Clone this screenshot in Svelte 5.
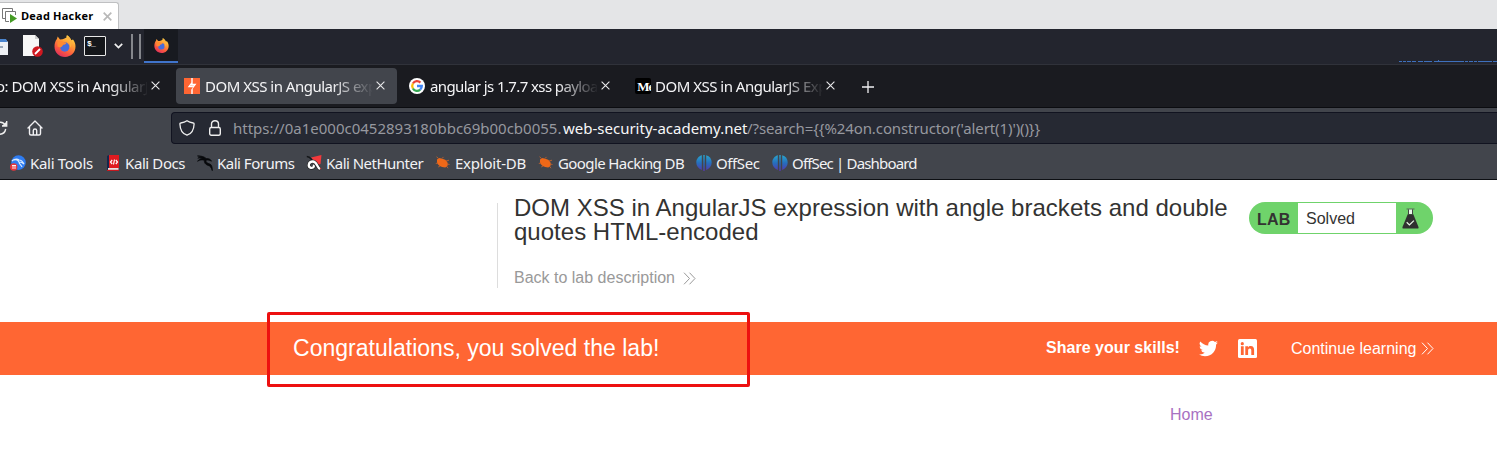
<script>
  const tabs = [
    { title: 'o: DOM XSS in AngularJS', icon: 'none', cls: 'first' },
    { title: 'DOM XSS in AngularJS exp', icon: 'burp', cls: 'active' },
    { title: 'angular js 1.7.7 xss payloa', icon: 'google', cls: 'google' },
    { title: 'DOM XSS in AngularJS Exp', icon: 'medium', cls: 'medium' },
  ];
  const bookmarks = [
    { label: 'Kali Tools', icon: 'tools', w: 95, ls: -0.3 },
    { label: 'Kali Docs', icon: 'docs', w: 92, ls: -0.4 },
    { label: 'Kali Forums', icon: 'dragon', w: 109, ls: -0.5 },
    { label: 'Kali NetHunter', icon: 'hunter', w: 129, ls: -0.52 },
    { label: 'Exploit-DB', icon: 'bug', w: 103, ls: -0.22 },
    { label: 'Google Hacking DB', icon: 'bug', w: 158, ls: -0.6 },
    { label: 'OffSec', icon: 'offsec', w: 76, ls: -0.4 },
    { label: 'OffSec | Dashboard', icon: 'offsec', w: 150, ls: -0.83 },
  ];
</script>

{#snippet firefox(size)}
  <svg class="ff" width={size} height={size} viewBox="0 0 22 22">
    <defs>
      <linearGradient id="flame" x1="0.8" y1="0" x2="0.25" y2="1">
        <stop offset="0" stop-color="#ffe14a" /><stop offset=".38" stop-color="#ff9a35" />
        <stop offset=".7" stop-color="#fb5840" /><stop offset="1" stop-color="#dc2c5e" />
      </linearGradient>
    </defs>
    <path fill="url(#flame)" d="M13 0c3 2 4 4 4.300 5.200L19 4.600c1.600 2 2.500 4.300 2.500 7C21.500 17.600 17 22 11 22S.5 17.500.5 11.500c0-3 .8-5.500 2.400-7.500l.8-2.400L6 4.500l2.500-.2c1.500-.4 2.500-1 4-1.800C12.200 1.800 12.400.8 13 0z" />
    <circle cx="10.800" cy="12" r="4.700" fill="#466ddc" />
    <path fill="#ff8a32" d="M3.500 7.500c2-2 4.500-1.700 6-.6l3 .8c-.5 1.500-2 1.900-3.400 2.100-.5 1.700-1.600 2.200-2.600 2.700l-3-1z" />
    <path fill="#ffb23d" d="M13 4c3 2 4 5 2.500 9 2-1.500 2.500-4 1.800-7.800L14 1z" />
  </svg>
{/snippet}

{#snippet chevrons()}
  <svg class="chev" width="13" height="13" viewBox="0 0 13 13"><path d="M1 .7l5.500 5.800L1 12.300M6.500.7L12 6.500l-5.500 5.800" fill="none" stroke="currentColor" stroke-width="1" /></svg>
{/snippet}

{#snippet icon(name)}
  <svg class="ico" width="16" height="16" viewBox="0 0 16 16">
    {#if name === 'burp'}
      <rect width="16" height="16" fill="#ff6633" />
      <path fill="#fff" d="M7.300 0h1.400v5.800h3.800L8.700 10.800V16H7.300v-4.300h-.1L8.900 9.200H3.700L7.300 4.600z" />
      <path fill="#ff6633" d="M7.300 6.700l-.9 1.200h.9zM8.700 7.300v1.100l.8-1.100z" />
    {:else if name === 'google'}
      <circle cx="8" cy="8" r="8" fill="#fff" />
      <g fill="none" stroke-width="2.300"><path stroke="#ea4335" d="M3.900 5.500A4.800 4.800 0 0 1 11.400 4.600" /><path stroke="#fbbc05" d="M3.900 5.500a4.900 4.900 0 0 0 0 5" /><path stroke="#34a853" d="M3.900 10.500a4.800 4.800 0 0 0 7.300 1.100" /><path stroke="#4285f4" d="M8 8h4.800c0 1.500-.6 2.700-1.600 3.600" /></g>
    {:else if name === 'medium'}
      <rect width="16" height="16" rx="2" fill="#000" /><text x="2.300" y="12.700" class="mtext" textLength="17" lengthAdjust="spacing">Me</text>
    {:else if name === 'tools'}
      <circle cx="8.500" cy="7.600" r="7.300" fill="#2e7cf2" /><path d="M2 6c3-3 6-2 7-1 3 0 4 2 5 4-2-2-4-2-5-2 0 2 2 3 3 5M4 5c2-1 4 0 5 2" fill="none" stroke="#d9eaff" stroke-width="1.200" />
      <circle cx="3.700" cy="12" r="3.700" fill="#e5363d" /><path d="M2 10.500h4M3 10.500v3.500M5 10.500v3.500" stroke="#fff" stroke-width=".9" />
    {:else if name === 'docs'}
      <path d="M2 1l2-1v15H2z" fill="#15264c" /><path d="M4 0h10v13H4z" fill="#e01b20" /><path d="M3 13h10.500v2H3z" fill="#e9e1e1" /><path d="M2 14.800h12V16H2z" fill="#c4191f" /><path d="M7.200 5L5.500 7l1.700 2M10.800 5l1.700 2-1.700 2M9.500 4.500l-1 5" stroke="#fff" stroke-width="1.200" fill="none" />
    {:else if name === 'dragon'}
      <path d="M.5.900C5 .7 8 2.200 9.200 3.500 12 3.200 14 4.700 14.500 6.200c-2-1-4-1.400-5.500-1-.3 2 1.200 3 3.300 3.600 2.500.8 3 2.700 3 6.900-.9-3.300-2-4.700-4.300-5.300C8.200 9.500 7 7.500 7.400 5.300 5 4.700 3 4.600.5 6.300 1.700 4.700 3 3.900 5.700 3.800 4 3 2 2.800.8 3.200 2 2.200 3.500 2.100 5 2.300 3.400 1.400 2 1.100.5.900z" fill="#07090c" stroke="#07090c" stroke-width=".7" />
    {:else if name === 'hunter'}
      <path d="M5 2.500L15.500 0l-1 9-3 1z" fill="#f3393c" /><path d="M11 9l4.500 4.500-1.500 1-4-3z" fill="#d9272d" />
      <path d="M.8 1.500c3 0 4 2 5.200 3.500" fill="none" stroke="#15171a" stroke-width="1.500" />
      <path d="M14 14c-3-1.200-3-7.500-7.200-7.500-4.500 0-5.300 5.500-2 6.300 3 .6 3.800-1.800 2.200-2.600" fill="none" stroke="#222" stroke-width="3.600" /><path d="M14 14c-3-1.200-3-7.500-7.200-7.500-4.500 0-5.300 5.500-2 6.300 3 .6 3.800-1.800 2.200-2.600" fill="none" stroke="#fff" stroke-width="2.300" />
    {:else if name === 'bug'}
      <path d="M2 4.500l2-1.400 2.500.3 3.700 1.300 2 2 .7 2.300-.6 2.500-2.200.9-3-.4-2.500-1-2-2L2 7.500z" fill="#ee6818" /><path d="M3 3L1.500 1.800M7 3.500l1.500-1.600M11 6l3-.8M12.500 9l2 .5M11.500 11.500l1.600 1.700M5 11l-1.800 1M2.700 8L.8 8.500" stroke="#b35f31" stroke-width="1" />
    {:else if name === 'offsec'}
      <defs><linearGradient id="offg" gradientUnits="userSpaceOnUse" x1="0" y1="0" x2="0" y2="16"><stop stop-color="#2aa7ce" /><stop offset=".5" stop-color="#256ebd" /><stop offset="1" stop-color="#5736ae" /></linearGradient></defs>
      <path d="M5.800.3v14.700C2.500 13.500.3 11 .3 7.400.3 3.800 3 1 5.800.3zM7.300 0h1.400v16H7.300zM10.200.3c3.500.9 5.500 3.600 5.500 7.100 0 3.600-2.200 6.100-5.500 7.600z" fill="url(#offg)" />
    {/if}
  </svg>
{/snippet}

<main>
  <header class="vm">
    <div class="vmtab">
      <svg width="16" height="16" viewBox="0 0 16 16"><path d="M3 10.500H.5V.5h10V3M7 13.500H3.500v-10h10V7" fill="none" stroke="#777" /><path d="M8 6l7 4.500L8 15z" fill="#459b25" /></svg>
      <b>Dead Hacker</b>
      <svg class="vmclose" width="9" height="9" viewBox="0 0 9 9"><path d="M.7.7l7.600 7.600M8.300.7L.7 8.300" stroke="#b9b9b9" stroke-width="1.700" /></svg>
    </div>
  </header>

  <div class="panel">
    <svg class="files" width="8" height="18" viewBox="0 0 8 18"><path d="M0 2h6l2 2v13H0z" fill="#eef1f5" /><path d="M0 1h6l1.500 3H0z" fill="#4b85cf" /><path d="M0 8h3v2H0z" fill="#9aa8ba" /></svg>
    <svg class="note" width="22" height="22" viewBox="0 0 22 22"><path d="M1 0h12l4 4v17H1z" fill="#f7f7f7" /><path d="M13 0v4h4" fill="#cfcfcf" /><circle cx="15.500" cy="16.500" r="5.300" fill="#cf1820" /><path d="M13 19l5-5" stroke="#fff" stroke-width="1.800" /></svg>
    <span class="fox">{@render firefox(22)}</span>
    <div class="term">$_</div>
    <svg class="down" width="9" height="6" viewBox="0 0 9 6"><path d="M.8.8l3.700 3.700L8.200.8" fill="none" stroke="#f0f0f0" stroke-width="1.700" /></svg>
    <i class="bar"></i><i class="bar"></i>
    <div class="task">{@render firefox(15)}</div>
    <svg class="graph" width="98" height="4" viewBox="0 0 98 4"><path d="M0 1.500h98" stroke="#3e70bd" stroke-dasharray="3 1 3 1 4 1 4 2 5 1 8 2 30 1 3 1 4 1 3 1 14 1 6" /><path d="M39.500 0v2" stroke="#3e70bd" /></svg>
  </div>

  <nav class="tabs">
    {#each tabs as tab}
      <div class="tab {tab.cls}">
        {#if tab.icon !== 'none'}{@render icon(tab.icon)}{/if}
        <span class="title">{tab.title}</span>
        <svg class="x" width="9" height="9" viewBox="0 0 9 9"><path d="M.6.6l7.800 7.800M8.400.6L.6 8.400" stroke="#e9e9eb" stroke-width="1.100" /></svg>
      </div>
    {/each}
    <svg class="plus" width="12" height="12" viewBox="0 0 12 12"><path d="M6 0v12M0 6h12" stroke="#f0f0f2" stroke-width="1.300" /></svg>
  </nav>

  <section class="tools">
    <div class="address">
      <svg class="reload" width="8" height="16" viewBox="0 0 8 16"><path d="M0 2.200c2.500-.2 4.300 1 5.300 3.300M6.700 1v5H2M5.700 9c-.6 3.200-2.700 5-5.700 5.200" fill="none" stroke="#eee" stroke-width="1.400" /><path d="M7 1v5H2z" fill="#eee" /></svg>
      <svg class="home" width="16" height="16" viewBox="0 0 16 16"><path d="M1 8l7-7 7 7M2.500 6.500v7c0 1 .5 1.500 1.500 1.500h8c1 0 1.500-.5 1.500-1.500v-7M6.300 15v-4.500c0-1 .5-1.500 1.700-1.500s1.700.5 1.700 1.500V15" fill="none" stroke="#f0f0f2" stroke-width="1.400" stroke-linejoin="round" stroke-linecap="round" /></svg>
      <div class="url">
        <svg class="shield" width="16" height="16" viewBox="0 0 16 16"><path d="M8 .8C6.300 2 4 2.700 1.700 3c-.7 0-.8.400-.8.900C1.100 9.500 3.200 13.700 8 15.200c4.800-1.500 6.900-5.700 7.100-11.300 0-.5-.1-.9-.8-.9C12 2.700 9.700 2 8 .8z" fill="none" stroke="#eee" stroke-width="1.300" /></svg>
        <svg class="lock" width="12" height="16" viewBox="0 0 12 16"><path d="M2.500 7.500V4C2.500 2 4 .8 6 .8S9.500 2 9.500 4v3.500" fill="none" stroke="#eee" stroke-width="1.400" /><rect x=".7" y="7.500" width="10.600" height="7.700" rx="1.500" fill="none" stroke="#eee" stroke-width="1.400" /></svg>
        <span class="u1">https://0a1e000c0452893180bbc69b00cb0055.</span><span class="u2">web-security-academy.net</span><span class="u3">/?search={'{{'}%24on.constructor('alert(1)')(){'}}'}</span>
        <i class="dot"></i>
      </div>
    </div>
    <div class="bookmarks">
      {#each bookmarks as b}
        <div class="bm" style:width="{b.w}px" style:letter-spacing="{b.ls}px">{@render icon(b.icon)}<span>{b.label}</span></div>
      {/each}
    </div>
  </section>

  <section class="lab">
    <div class="heading">
      <h2>DOM XSS in AngularJS expression with angle brackets and double quotes HTML-encoded</h2>
      <div class="back"><span>Back to lab description</span>{@render chevrons()}</div>
    </div>
    <div class="badge">
      <b>LAB</b><span>Solved</span>
      <svg width="17" height="21" viewBox="0 0 17 21"><path d="M4.500.5h8v1h-8z" fill="#5a685b" /><path d="M5.700 6.300h5.600L16.500 19c.3 1-.2 1.600-1 1.600h-14c-.8 0-1.300-.7-1-1.600z" fill="#303030" /><path d="M6 1.500h5v4.800H6z" fill="#303030" /><path d="M6.900 1.500h3.200v4.500H6.900z" fill="#e9f7e7" /><path d="M4.700 14.300l2.700 2.600 4.500-4.300" fill="none" stroke="#e6f5e5" stroke-width="1.300" /></svg>
    </div>
  </section>

  <section class="banner">
    <span class="congrats">Congratulations, you solved the lab!</span>
    <b class="share">Share your skills!</b>
    <svg class="tw" width="19" height="17" viewBox="0 2 24 20"><path fill="#fff" d="M23.950 4.570a10 10 0 0 1-2.820.77 4.960 4.960 0 0 0 2.160-2.720c-.95.550-2 .950-3.130 1.180a4.920 4.920 0 0 0-8.380 4.480C7.690 8.100 4.070 6.130 1.640 3.160a4.900 4.900 0 0 0 1.520 6.570 4.900 4.900 0 0 1-2.230-.61v.06a4.920 4.920 0 0 0 3.950 4.830 5 5 0 0 1-2.210.08 4.940 4.940 0 0 0 4.600 3.420A9.870 9.870 0 0 1 0 19.540a14 14 0 0 0 7.550 2.210c9.050 0 14-7.500 14-13.980 0-.21 0-.42-.02-.63a9.900 9.900 0 0 0 2.420-2.570z" /></svg>
    <svg class="li" width="19" height="19" viewBox="0 0 19 19"><rect width="19" height="19" rx="1.500" fill="#fff" /><circle cx="4.300" cy="4.700" r="1.600" fill="#f63" /><path d="M2.900 7.300h2.800V16H2.900zM7.300 7.300H10v1.200c.6-.9 1.500-1.400 2.700-1.400 2.700 0 3.400 1.600 3.400 4.200V16h-2.800v-4.200c0-1.300-.2-2.300-1.500-2.300-1.400 0-1.700 1-1.700 2.300V16H7.300z" fill="#f63" /></svg>
    <span class="cont">Continue learning</span>{@render chevrons()}
    <div class="mark"></div>
  </section>
  <div class="homerow"><span>Home</span></div>
</main>

<style>
  :global(body) { margin: 0; background: #fff; overflow: hidden; }
  main { width: 1497px; height: 456px; overflow: hidden; background: #fff; font-family: "Liberation Sans", Arial, sans-serif; }
  svg { display: block; flex: none; }
  div, section, nav, header { box-sizing: border-box; }
  span, b { white-space: nowrap; }
  .vm { height: 29px; background: #e4e5e7; padding-top: 2px; }
  .vmtab { width: 119px; height: 27px; background: #fff; border: 1px solid #bfc0c2; border-width: 1px 1px 0 0; border-radius: 0 3px 0 0; display: flex; align-items: center; padding-left: 2px; }
  .vmtab b { font: 700 11px/16px "Open Sans", sans-serif; letter-spacing: .2px; width: 73px; margin-left: 3px; margin-right: 9px; color: #000; }
  .panel { height: 36px; background: #23252e; border-bottom: 1px solid #30323a; display: flex; align-items: center; }
  .note { margin-left: 14px; margin-top: -1px; }
  .fox { margin: -1px 0 0 10px; }
  .term { width: 22px; height: 20px; margin: -1px 0 0 8px; border: 1px solid #e8e8e8; border-radius: 1px; background: #14161a; color: #fff; font: 700 8px/9px "Liberation Mono", monospace; padding: 2px; letter-spacing: -.8px; }
  .down { margin: -1px 8px 0 8px; }
  .bar { width: 2px; height: 25px; background: #85878c; margin-right: 6px; }
  .bar + .bar { margin-right: 3px; }
  .task { width: 34px; height: 34px; align-self: flex-start; background: #181a20; border-bottom: 2px solid #4074cb; display: flex; align-items: center; justify-content: center; }
  .graph { margin-left: auto; align-self: flex-end; }
  .tabs { height: 43px; background: #1a1b20; border-bottom: 1px solid #0b0c10; display: flex; padding-top: 3px; font: 15px/20px "Noto Sans", sans-serif; color: #f4f4f6; }
  .tab { height: 36px; display: flex; align-items: center; border-radius: 4px; flex: none; }
  .first { width: 176px; }
  .active { width: 221px; padding-left: 8px; background: #42454c; }
  .google { width: 238px; padding-left: 12px; }
  .google .title { letter-spacing: -.6px; }
  .medium { width: 226px; }
  .title { overflow: hidden; width: 167px; margin: 0 4px 0 5px; letter-spacing: -.5px; -webkit-mask-image: linear-gradient(to right, #000 76%, transparent 101%); mask-image: linear-gradient(to right, #000 76%, transparent 101%); }
  .medium .title { margin-left: 4px; }
  .first .title { margin-left: -4px; width: 151px; }
  .x { margin-bottom: 1px; }
  .plus { margin: 13px 0 0 1px; }
  .mtext { font: 700 13px "Liberation Serif", serif; fill: #fff; }
  .tools { height: 72px; background: #42454c; border-bottom: 1px solid #0d0f13; padding-top: 4px; }
  .address { height: 32px; display: flex; align-items: center; }
  .home { margin-left: 19px; }
  .url { width: 1340px; height: 32px; margin-left: 128px; border: 1px solid #111320; border-right: 0; border-radius: 4px 0 0 4px; background: #262933; display: flex; align-items: center; padding-left: 7px; font: 15px/20px "Noto Sans", sans-serif; color: #96989f; flex: none; }
  .lock { margin: 0 12px 0 14px; }
  .u1 { width: 330px; }
  .u2 { width: 184px; color: #f7f7f8; }
  .u3 { width: 294px; letter-spacing: -.1px; }
  .dot { width: 3px; height: 4px; border-radius: 2px 0 0 2px; background: #eee; margin-left: auto; }
  .bookmarks { height: 35px; padding: 2px 0 0 10px; display: flex; align-items: center; font: 15px/20px "Noto Sans", sans-serif; color: #f2f2f4; }
  .bm { display: flex; align-items: center; gap: 4px; flex: none; }
  .lab { height: 142px; display: flex; align-items: flex-start; padding: 23px 0 0 497px; }
  .heading { width: 752px; height: 85px; border-left: 1px solid #ddd; padding-left: 16px; color: #333332; flex: none; }
  h2 { margin: -7px 0 0; font: 400 24px/24px "Liberation Sans", Arial, sans-serif; letter-spacing: .02px; width: 720px; }
  .back { margin-top: 23px; display: flex; gap: 8px; align-items: center; color: #999; font-size: 16px; line-height: 22px; }
  .badge { width: 184px; height: 32px; margin-top: -1px; border-radius: 16px; background: #6fd36b; display: flex; align-items: center; font-size: 16px; color: #333332; }
  .badge b { width: 41px; padding-left: 8px; margin-top: 3px; letter-spacing: .2px; }
  .badge span { box-sizing: border-box; width: 98px; height: 30px; line-height: 31px; background: #fff; padding-left: 8px; margin-right: 6px; }
  .banner { position: relative; height: 53px; background: #f63; color: #fff; display: flex; align-items: center; padding-left: 293px; font-size: 16px; }
  .congrats { width: 753px; font-size: 23px; letter-spacing: .02px; }
  .share { width: 153px; margin-top: -2px; letter-spacing: .03px; }
  .tw { width: 19px; margin-top: -1px; }
  .li { margin: 0 34px 0 20px; }
  .cont { width: 126px; margin: 1px 4px 0 0; }
  .mark { position: absolute; left: 267px; top: -10px; width: 483px; height: 75px; border: 3px solid #ed1010; border-radius: 2px; }
  .homerow { padding: 30px 0 0 1170px; font-size: 16px; line-height: 20px; color: #a871c2; }
</style>
